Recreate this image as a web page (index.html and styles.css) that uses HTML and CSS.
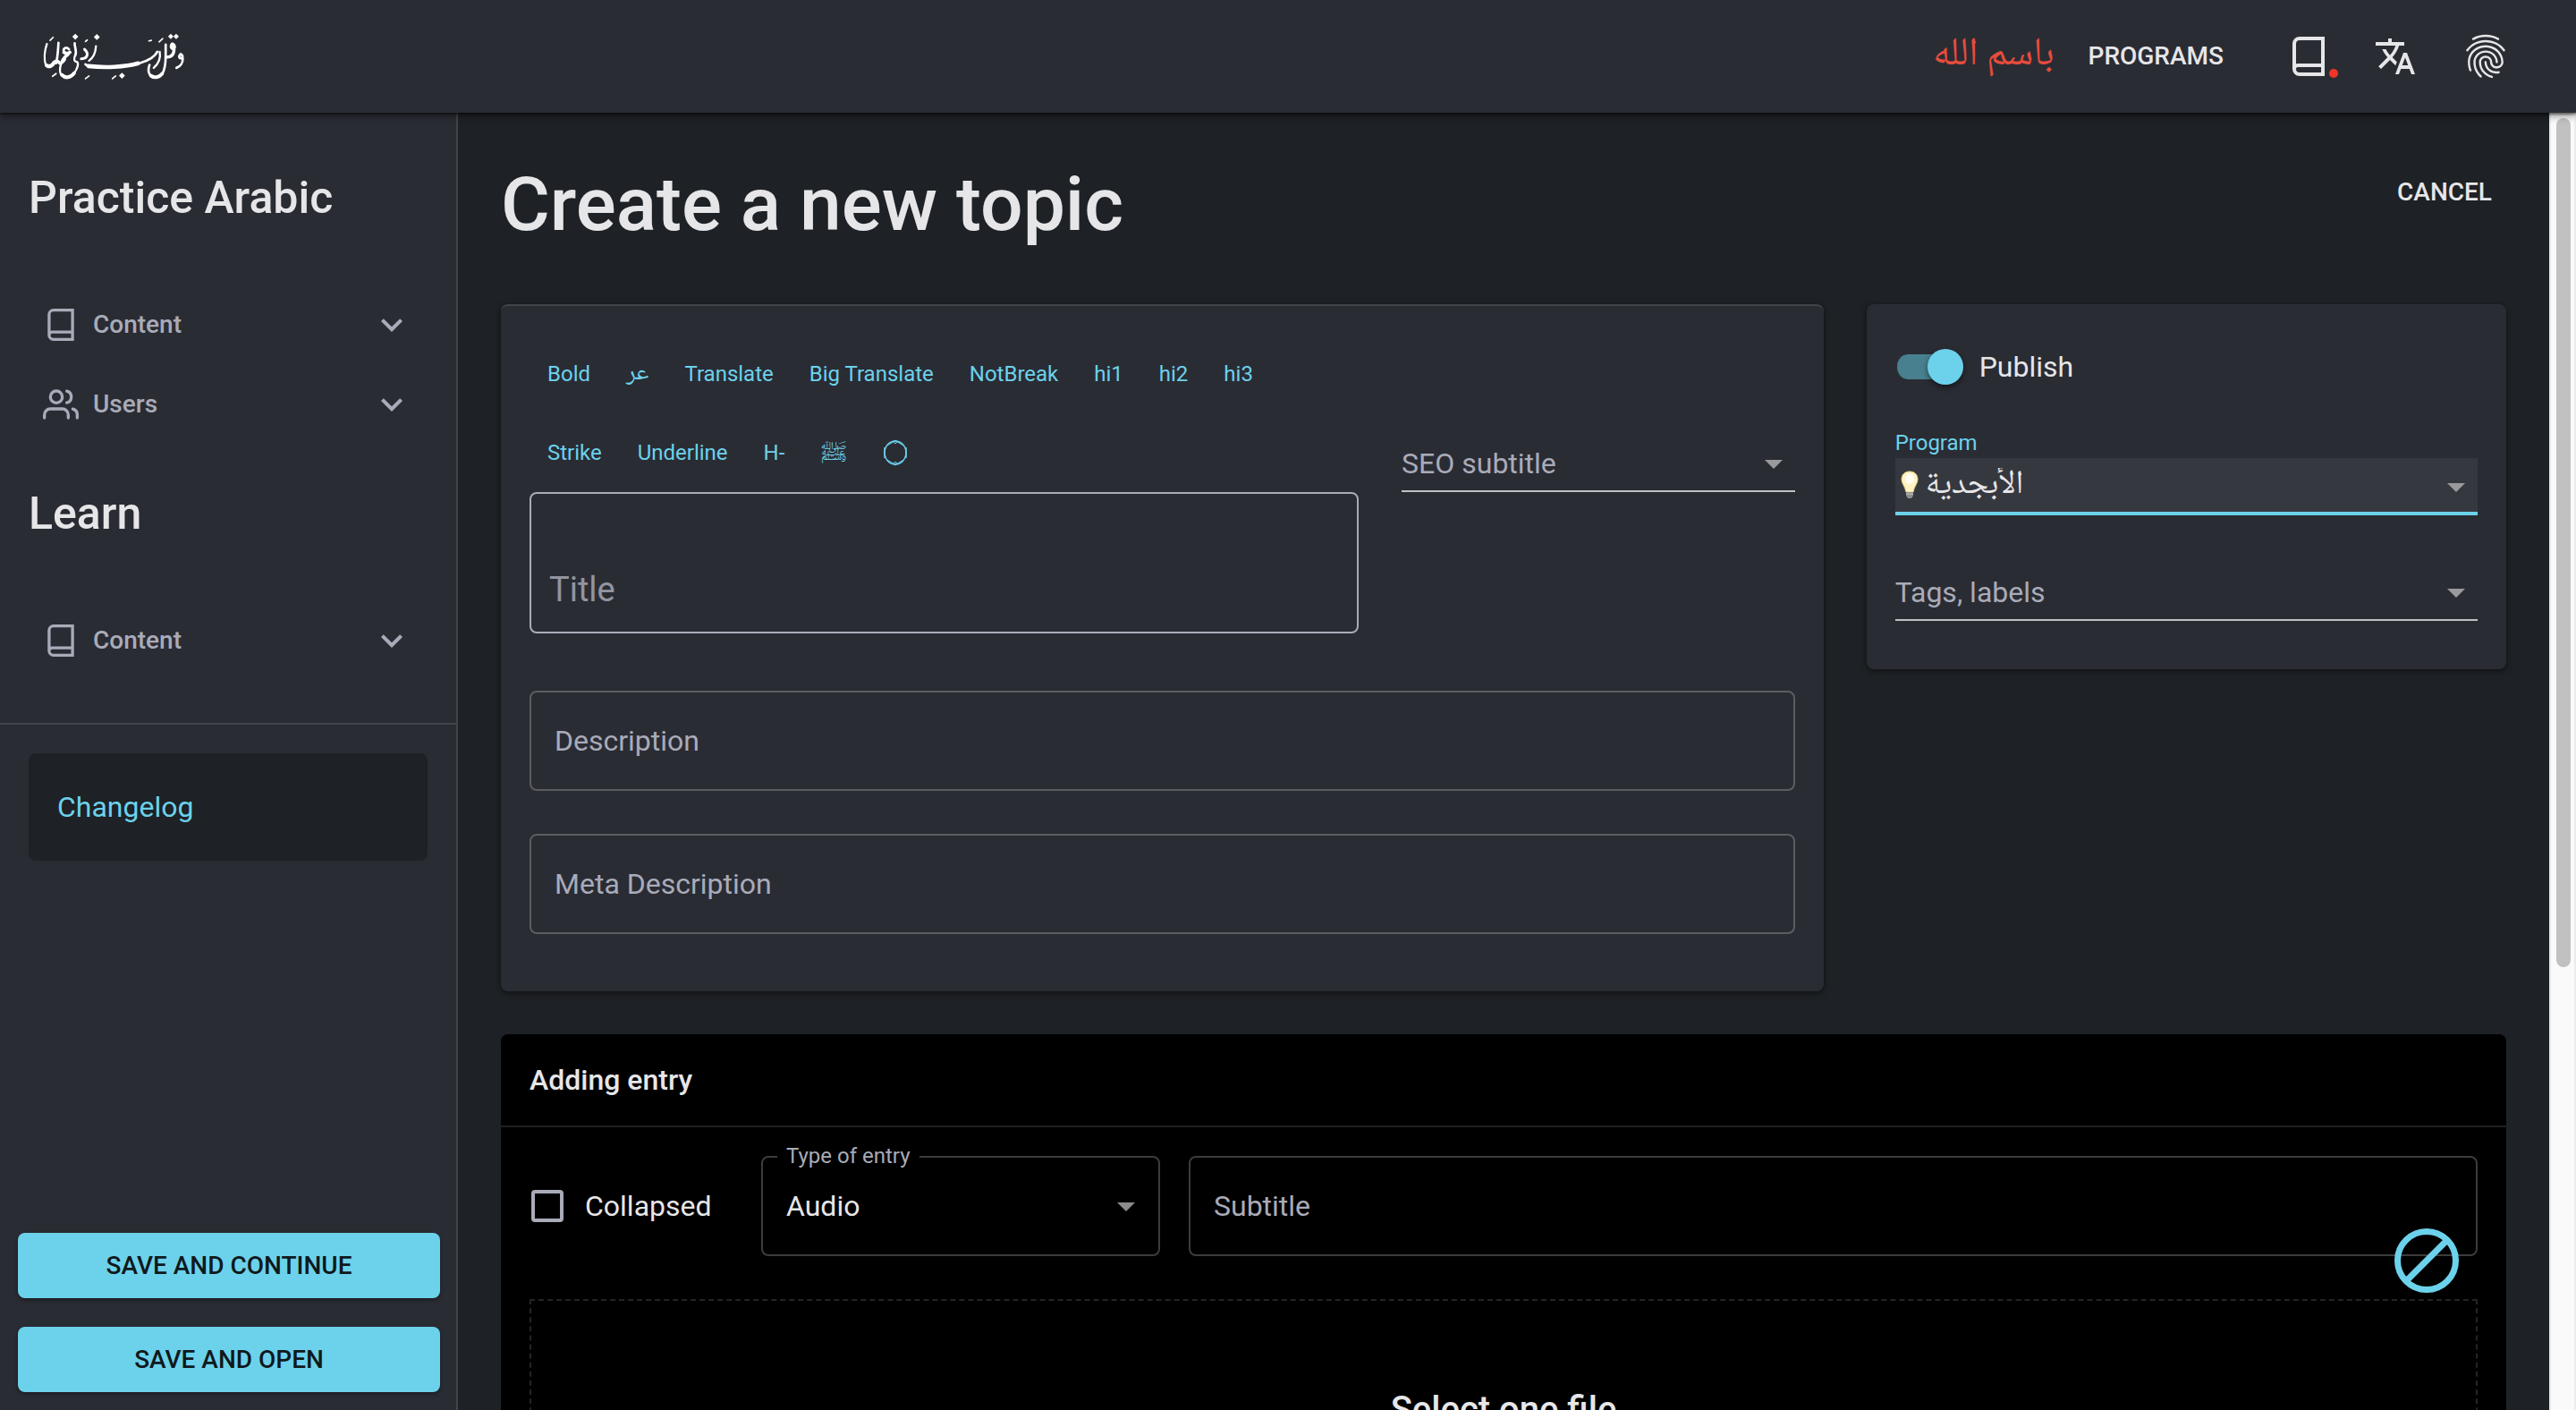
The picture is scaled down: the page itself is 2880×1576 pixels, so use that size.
FILE: index.html
```html
<!DOCTYPE html>
<html lang="en">
<head>
<meta charset="utf-8">
<title>Create a new topic</title>
<link rel="stylesheet" href="styles.css">
</head>
<body>
<svg class="defs" aria-hidden="true">
  <symbol id="book" viewBox="0 0 36 44"><path d="M34 2H8a6 6 0 0 0-6 6v28a6 6 0 0 0 6 6h26zM2 36a4 4 0 0 1 4-4h28" fill="none" stroke="currentColor" stroke-width="4"/></symbol>
  <symbol id="users" viewBox="0 0 24 24"><g fill="none" stroke="currentColor" stroke-width="2" stroke-linecap="round" stroke-linejoin="round"><path d="M17 21v-2a4 4 0 0 0-4-4H5a4 4 0 0 0-4 4v2"/><circle cx="9" cy="7" r="4"/><path d="M23 21v-2a4 4 0 0 0-3-3.87M16 3.13a4 4 0 0 1 0 7.75"/></g></symbol>
  <symbol id="chevron" viewBox="0 0 24 24"><path d="M7.41 8.59 12 13.17l4.59-4.58L18 10l-6 6-6-6z" fill="currentColor"/></symbol>
  <symbol id="caret" viewBox="0 0 20 10"><path d="M0 0h20L10 10z" fill="currentColor"/></symbol>
</svg>
<header class="topbar">
  <a class="logo" href="#" aria-label="Home">
    <svg viewBox="50 40 490 170" fill="none" stroke="currentColor" stroke-linecap="round" stroke-width="6">
      <path stroke-width="7" d="M69 82C61 106 59 136 66 154"/><path stroke-width="13" d="M69 154C76 160 86 156 92 146"/>
      <path stroke-width="8" d="M108 78C106 104 106 124 100 146"/><path stroke-width="11" d="M92 146C98 136 106 138 112 146C118 148 122 142 128 134"/>
      <path stroke-width="8" d="M143 100C134 90 122 96 126 108"/><path stroke-width="11" d="M126 110C134 116 144 112 146 110M140 116C132 122 126 130 122 136"/>
      <path stroke-width="7" d="M122 136C112 156 110 172 116 184"/><path stroke-width="12" d="M120 186C130 197 148 196 160 180"/>
      <path stroke-width="7" d="M160 180C172 164 176 148 170 142C160 142 158 132 164 120"/><path stroke-width="8" d="M164 120C170 108 162 94 162 80"/>
      <path stroke-width="9" d="M195 100C210 114 206 130 184 132"/><path stroke-width="7" d="M233 90C232 110 224 128 210 138"/>
      <path stroke-width="14" d="M208 156C260 162 330 160 374 147"/><path stroke-width="8" d="M198 150C210 164 310 164 382 145C412 136 430 124 438 108"/>
      <path stroke-width="7" d="M446 108C450 130 440 150 426 162"/>
      <path stroke-width="8" d="M412 152C407 166 408 178 414 186"/><path stroke-width="12" d="M417 188C428 197 444 194 454 182"/><path stroke-width="8" d="M454 182C466 166 466 140 466 120V84"/>
      <path stroke-width="10" d="M488 82C480 92 488 102 494 96C498 90 494 84 488 82M494 98C494 118 484 126 470 126"/>
      <path stroke-width="8" d="M516 116C506 126 514 134 522 128C524 120 520 118 516 116M523 130C524 146 514 158 502 162"/>
      <path stroke-width="5" d="M80 70l10-10M88 190l12-9M198 74l6-5M410 72l8-2M444 75l12-11M198 198l12-9M288 198l11-9"/>
      <g fill="currentColor" stroke="none"><path d="M164 48l10 10-10 10-10-10zM236 49l10 10-10 10-10-10zM320 178l10 10-10 10-10-10zM483 48l9 9-9 9-9-9zM501 48l9 9-9 9-9-9z"/></g>
    </svg>
  </a>
  <nav class="topnav">
    <a class="bismillah" href="#" lang="ar">باسم الله</a>
    <a class="text-link" href="#">PROGRAMS</a>
    <button class="icon-btn book-btn" aria-label="Library"><svg class="book-icon"><use href="#book"/></svg><span class="dot"></span></button>
    <button class="icon-btn" aria-label="Language"><svg class="translate-icon" viewBox="0 0 24 24"><path fill="currentColor" d="M12.87 15.07l-2.54-2.51.03-.03c1.74-1.94 2.98-4.17 3.71-6.53H17V4h-7V2H8v2H1v1.99h11.17C11.5 7.92 10.44 9.75 9 11.35 8.07 10.32 7.3 9.19 6.69 8h-2c.73 1.63 1.73 3.17 2.98 4.56l-5.09 5.02L4 19l5-5 3.11 3.11.76-2.04zM18.5 10h-2L12 22h2l1.12-3h4.75L21 22h2l-4.5-12zm-2.62 7l1.62-4.33L19.12 17h-3.24z"/></svg></button>
    <button class="icon-btn" aria-label="Account"><svg class="finger-icon" viewBox="0 0 24 24"><path fill="currentColor" d="M17.81 4.47c-.08 0-.16-.02-.23-.06C15.66 3.42 14 3 12.01 3c-1.98 0-3.86.47-5.57 1.41-.24.13-.54.04-.68-.2-.13-.24-.04-.55.2-.68C7.82 2.52 9.86 2 12.01 2c2.13 0 3.99.47 6.03 1.52.25.13.34.43.21.67-.09.18-.26.28-.44.28zM3.5 9.72c-.1 0-.2-.03-.29-.09-.23-.16-.28-.47-.12-.7.99-1.4 2.25-2.5 3.75-3.27C9.98 4.04 14 4.03 17.15 5.65c1.5.77 2.76 1.86 3.75 3.25.16.22.11.54-.12.7-.23.16-.54.11-.7-.12-.9-1.26-2.04-2.25-3.39-2.94-2.87-1.47-6.54-1.47-9.4.01-1.36.7-2.5 1.7-3.4 2.96-.08.14-.23.21-.39.21zm6.25 12.07c-.13 0-.26-.05-.35-.15-.87-.87-1.34-1.43-2.01-2.64-.69-1.23-1.05-2.73-1.05-4.34 0-2.97 2.54-5.39 5.66-5.39s5.66 2.42 5.66 5.39c0 .28-.22.5-.5.5s-.5-.22-.5-.5c0-2.42-2.09-4.39-4.66-4.39-2.57 0-4.66 1.97-4.66 4.39 0 1.44.32 2.77.93 3.85.64 1.15 1.08 1.64 1.85 2.42.19.2.19.51 0 .71-.11.1-.24.15-.37.15zm7.17-1.85c-1.19 0-2.24-.3-3.1-.89-1.49-1.01-2.38-2.65-2.38-4.39 0-.28.22-.5.5-.5s.5.22.5.5c0 1.41.72 2.74 1.94 3.56.71.48 1.54.71 2.54.71.24 0 .64-.03 1.04-.1.27-.05.53.13.58.41.05.27-.13.53-.41.58-.57.11-1.07.12-1.21.12zM14.91 22c-.04 0-.09-.01-.13-.02-1.59-.44-2.63-1.03-3.72-2.1-1.4-1.39-2.17-3.24-2.17-5.22 0-1.62 1.38-2.94 3.08-2.94 1.7 0 3.08 1.32 3.08 2.94 0 1.07.93 1.94 2.08 1.94s2.08-.87 2.08-1.94c0-3.77-3.25-6.83-7.25-6.83-2.84 0-5.44 1.58-6.61 4.03-.39.81-.59 1.76-.59 2.8 0 .78.07 2.01.67 3.61.1.26-.03.55-.29.64-.26.1-.55-.04-.64-.29-.49-1.31-.73-2.61-.73-3.96 0-1.2.23-2.29.68-3.24 1.33-2.79 4.28-4.6 7.51-4.6 4.55 0 8.25 3.51 8.25 7.83 0 1.62-1.38 2.94-3.08 2.94s-3.08-1.32-3.08-2.94c0-1.07-.93-1.94-2.08-1.94s-2.08.87-2.08 1.94c0 1.71.66 3.31 1.87 4.51.95.94 1.86 1.46 3.27 1.85.27.07.42.35.35.61-.05.23-.26.38-.47.38z"/></svg></button>
  </nav>
</header>
<div class="shell">
  <aside class="sidebar">
    <section class="menu">
      <h2>Practice Arabic</h2>
      <button class="menu-item"><svg class="menu-book"><use href="#book"/></svg><span>Content</span><svg class="chevron"><use href="#chevron"/></svg></button>
      <button class="menu-item"><svg class="menu-users"><use href="#users"/></svg><span>Users</span><svg class="chevron"><use href="#chevron"/></svg></button>
    </section>
    <section class="menu">
      <h2>Learn</h2>
      <button class="menu-item"><svg class="menu-book"><use href="#book"/></svg><span>Content</span><svg class="chevron"><use href="#chevron"/></svg></button>
    </section>
    <div class="changelog-wrap"><a class="changelog" href="#">Changelog</a></div>
    <div class="save-actions">
      <button class="primary">SAVE AND CONTINUE</button>
      <button class="primary">SAVE AND OPEN</button>
    </div>
  </aside>
  <main class="content">
    <div class="page-head">
      <h1>Create a new topic</h1>
      <button class="cancel">CANCEL</button>
    </div>
    <div class="grid">
      <section class="card main-card">
        <div class="grid">
          <div class="wide">
            <div class="toolbar"><button>Bold</button><button lang="ar">عر</button><button>Translate</button><button>Big Translate</button><button>NotBreak</button><button>hi1</button><button>hi2</button><button>hi3</button></div>
            <div class="toolbar"><button>Strike</button><button>Underline</button><button>H-</button><button lang="ar" class="salla">ﷺ</button><button aria-label="End of verse"><svg class="ayah" viewBox="0 0 28 32" fill="none" stroke="currentColor"><ellipse cx="14" cy="16" rx="12" ry="13" stroke-width="1.500"/><path d="M3 10C6 6 10 6 14 2C18 6 22 6 25 10M3 22C6 26 10 26 14 30C18 26 22 26 25 22" stroke-width="1"/><path d="M2 10v12M26 10v12" stroke-width="1.500"/><circle cx="14" cy="4" r="1.500"/><circle cx="14" cy="28" r="1.500"/></svg></button></div>
            <input class="title-input" type="text" placeholder="Title" aria-label="Title">
          </div>
          <div class="narrow seo">
            <div class="line-select"><select aria-label="SEO subtitle"><option>SEO subtitle</option></select><svg class="caret"><use href="#caret"/></svg></div>
          </div>
        </div>
        <input class="outlined" type="text" placeholder="Description" aria-label="Description">
        <input class="outlined" type="text" placeholder="Meta Description" aria-label="Meta Description">
      </section>
      <section class="card side-card">
        <label class="switch"><input type="checkbox" role="switch" checked><span>Publish</span></label>
        <label class="field-label" for="program">Program</label>
        <div class="line-select focused">
          <svg class="bulb" viewBox="0 0 20 32"><path d="M10 1C4 1 1 5 1 10c0 4 4 8 5 14h8c1-6 5-10 5-14 0-5-3-9-9-9z" fill="#fff3c4" stroke="#e8d27a"/><ellipse cx="10" cy="9" rx="5" ry="6" fill="#fffdf2"/><path d="M6 24h8v4l-2 3H8l-2-3z" fill="#8e8e8e"/><path d="M6 26h8" stroke="#c9c9c9"/></svg>
          <select id="program" lang="ar"><option>الأبجدية</option></select><svg class="caret"><use href="#caret"/></svg>
        </div>
        <div class="line-select"><select aria-label="Tags, labels"><option>Tags, labels</option></select><svg class="caret"><use href="#caret"/></svg></div>
      </section>
    </div>
    <section class="entry">
      <h3>Adding entry</h3>
      <div class="entry-body">
        <div class="entry-row">
          <label class="check"><input type="checkbox"><span>Collapsed</span></label>
          <div class="type-field">
            <label for="type">Type of entry</label>
            <select id="type"><option>Audio</option></select><svg class="caret"><use href="#caret"/></svg>
          </div>
          <input class="outlined" type="text" placeholder="Subtitle" aria-label="Subtitle">
        </div>
        <div class="dropzone"><p>Select one file</p></div>
      </div>
      <button class="block" aria-label="Remove entry"><svg viewBox="0 0 72 72" fill="none" stroke="currentColor" stroke-width="7"><circle cx="36" cy="36" r="32.500"/><path d="M14 58 58 14"/></svg></button>
    </section>
  </main>
  <div class="scrollbar"><div class="thumb"></div></div>
</div>
</body>
</html>
```
FILE: styles.css
```css
:root {
  --bg: #1e2125;
  --panel: #2a2c34;
  --line: #42444b;
  --text: #e6e6e8;
  --muted: #a9abb8;
  --accent: #6cd2eb;
}
* { box-sizing: border-box; }
body {
  margin: 0;
  height: 100vh;
  display: flex;
  flex-direction: column;
  overflow: hidden;
  background: var(--bg);
  color: var(--text);
  font: 32px/40px Roboto, "DejaVu Sans", sans-serif;
}
[lang="ar"] { font-family: "Noto Naskh Arabic", "Noto Sans Arabic", "DejaVu Sans", sans-serif; }
h1, h2, h3, p { margin: 0; font-weight: 500; }
a { color: inherit; text-decoration: none; }
button, input, select { font: inherit; color: inherit; }
button { padding: 0; border: 0; background: none; }
svg { display: block; flex: none; }
.defs { position: absolute; width: 0; height: 0; }

.topbar {
  position: relative;
  z-index: 1;
  flex: none;
  height: 126px;
  padding: 0 78px 0 46px;
  display: flex;
  align-items: center;
  justify-content: space-between;
  background: var(--panel);
  box-shadow: 0 4px 8px rgba(0, 0, 0, .4), 0 2px 2px rgba(0, 0, 0, .4);
}
.logo { color: #fff; }
.logo svg { width: 164px; height: 57px; }
.topnav { display: flex; align-items: center; height: 100%; }
.bismillah { color: #e74c3c; font-size: 44px; margin-right: 38px; }
.text-link { font-size: 28px; font-weight: 500; margin-right: 76px; }
.icon-btn { display: flex; }
.book-btn { position: relative; margin-right: 54px; }
.book-icon { width: 38px; height: 44px; }
.dot {
  position: absolute;
  right: -14px;
  bottom: -2px;
  width: 10px;
  height: 10px;
  border-radius: 50%;
  background: #f03528;
}
.translate-icon { width: 48px; height: 48px; margin-right: 48px; }
.finger-icon { width: 58px; height: 58px; margin-right: -6px; }

.shell { flex: 1; min-height: 0; display: flex; }
.sidebar {
  width: 512px;
  flex: none;
  display: flex;
  flex-direction: column;
  background: var(--panel);
  border-right: 2px solid var(--line);
}
.menu { padding: 65px 32px 0; }
.menu h2 { font-size: 50px; line-height: 60px; margin-bottom: 67px; }
.menu + .menu { padding-top: 48px; padding-bottom: 48px; border-bottom: 2px solid var(--line); }
.menu-item {
  width: 100%;
  height: 89px;
  padding: 0 16px;
  display: flex;
  align-items: center;
  gap: 16px;
  font-size: 28px;
  font-weight: 500;
  color: var(--muted);
}
.menu-item span { flex: 1; text-align: left; }
.menu-book { width: 40px; height: 36px; }
.menu-users { width: 40px; height: 40px; }
.chevron { width: 48px; height: 48px; }
.changelog-wrap { padding: 32px; }
.changelog {
  display: block;
  padding: 40px 32px;
  border-radius: 8px;
  background: var(--bg);
  color: var(--accent);
}
.save-actions {
  margin-top: auto;
  padding: 20px 18px 20px 20px;
  display: flex;
  flex-direction: column;
  gap: 32px;
}
.primary {
  height: 73px;
  border-radius: 8px;
  background: var(--accent);
  color: #10191c;
  font-size: 28px;
  font-weight: 500;
  box-shadow: 0 2px 4px rgba(0, 0, 0, .4);
}

.content { flex: 1; min-width: 0; padding: 48px; overflow: hidden; }
.page-head {
  display: flex;
  justify-content: space-between;
  align-items: flex-start;
  margin-bottom: 48px;
}
.page-head h1 { font-size: 84px; line-height: 118px; margin-top: -4px; margin-bottom: 4px; }
.cancel { font-size: 28px; font-weight: 500; padding: 21px 16px; }
.grid {
  display: grid;
  grid-template-columns: repeat(12, 1fr);
  column-gap: 48px;
  align-items: start;
}
.main-card, .wide { grid-column: span 8; min-width: 0; }
.side-card, .narrow { grid-column: span 4; min-width: 0; }
.card {
  padding: 32px;
  border-radius: 8px;
  background: var(--panel);
  box-shadow: 0 2px 6px rgba(0, 0, 0, .5);
}
.main-card {
  border-top: 2px solid var(--line);
  padding-bottom: 64px;
  display: flex;
  flex-direction: column;
  gap: 48px;
}
.main-card > .grid { margin-bottom: 16px; }
.toolbar { display: flex; color: var(--accent); font-size: 24px; }
.toolbar button { height: 88px; padding: 0 20px; }
.toolbar [lang="ar"] { font-size: 28px; }
.toolbar .salla { font-size: 24px; padding-top: 6px; }
.ayah { width: 28px; height: 32px; }
.title-input {
  display: block;
  width: 100%;
  height: 158px;
  padding: 60px 20px 0;
  border: 2px solid var(--muted);
  border-radius: 8px;
  background: none;
  font-size: 38px;
}
::placeholder { color: var(--muted); opacity: 1; }
.title-input::placeholder { color: #9295a0; }
.outlined {
  width: 100%;
  height: 112px;
  padding: 0 26px;
  border: 2px solid #5c5d62;
  border-radius: 8px;
  background: none;
}
.seo { padding-top: 112px; }
.line-select {
  position: relative;
  height: 64px;
  display: flex;
  border-bottom: 2px solid #c0c1c4;
}
select {
  width: 100%;
  height: 100%;
  padding: 0;
  border: 0;
  outline: 0;
  background: none;
  appearance: none;
}
.line-select select { color: var(--muted); padding-top: 2px; }
.caret {
  position: absolute;
  right: 14px;
  top: 28px;
  width: 20px;
  height: 10px;
  color: #9a9a9d;
  pointer-events: none;
}
.side-card { padding-bottom: 54px; }
.switch { display: flex; align-items: center; gap: 18px; height: 76px; }
.switch input {
  appearance: none;
  position: relative;
  width: 76px;
  height: 28px;
  margin: 0;
  border-left: 2px solid transparent;
  border-right: 6px solid transparent;
  border-radius: 14px;
  background: #48808f padding-box;
}
.switch input::after {
  content: "";
  position: absolute;
  right: -6px;
  top: -6px;
  width: 40px;
  height: 40px;
  border-radius: 50%;
  background: var(--accent);
  box-shadow: 0 3px 6px rgba(0, 0, 0, .5);
}
.field-label {
  display: block;
  margin-top: 31px;
  margin-bottom: 1px;
  font-size: 24px;
  line-height: 32px;
  color: var(--accent);
}
.line-select.focused {
  padding-left: 6px;
  border-bottom: 4px solid var(--accent);
  background: #36383f;
  margin-bottom: 54px;
  gap: 8px;
}
.line-select.focused select { color: var(--text); font-size: 37px; }
.bulb { width: 20px; height: 32px; margin-top: 14px; }

.entry { position: relative; margin-top: 48px; border-radius: 8px; background: #000; }
.entry h3 { padding: 31px 32px; border-bottom: 2px solid #1f1f1f; font-size: 32px; }
.entry-body { padding: 32px; }
.entry-row { display: flex; align-items: center; gap: 32px; margin-bottom: 48px; }
.check { display: flex; align-items: center; gap: 24px; width: 227px; flex: none; padding-left: 2px; }
.check input {
  appearance: none;
  width: 36px;
  height: 36px;
  margin: 0;
  border: 4px solid var(--muted);
  border-radius: 4px;
}
.type-field {
  position: relative;
  flex: none;
  width: 446px;
  height: 112px;
  border: 2px solid #3c3c3c;
  border-radius: 8px;
}
.type-field label {
  position: absolute;
  left: 16px;
  top: -18px;
  padding: 0 10px;
  background: #000;
  color: var(--muted);
  font-size: 24px;
  line-height: 32px;
}
.type-field select { padding-left: 26px; }
.type-field .caret { right: 26px; top: 50px; color: #8c8c8c; }
.entry .outlined { border-color: #3c3c3c; flex: 1; min-width: 0; }
.dropzone {
  height: 400px;
  padding-top: 94px;
  border: 2px dashed #242424;
  text-align: center;
  font-size: 40px;
  line-height: 56px;
}
.block {
  position: absolute;
  right: 53px;
  top: 217px;
  width: 72px;
  height: 72px;
  color: var(--accent);
}

.scrollbar {
  flex: none;
  width: 30px;
  padding: 6px;
  border-left: 2px solid #e8e8e8;
  border-right: 2px solid #ececec;
  background: #fafafa;
}
.thumb { width: 16px; height: 66%; border-radius: 8px; background: #c1c1c1; }
```
